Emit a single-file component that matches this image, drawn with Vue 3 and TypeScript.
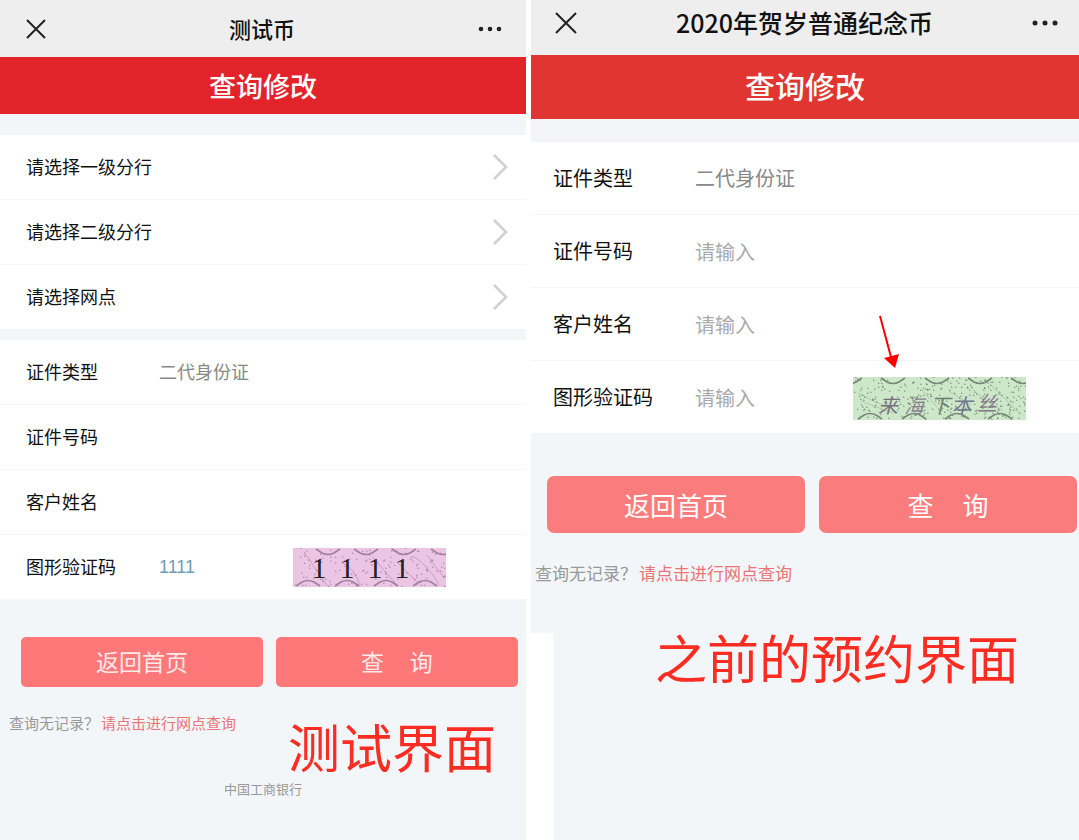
<script setup lang="ts">
import { ref } from 'vue'

interface Captcha {
  width: number
  height: number
  top: number[]
  bottom: number[]
}

const branches: string[] = ['请选择一级分行', '请选择二级分行', '请选择网点']

const testType = ref('二代身份证')
const testNumber = ref('')
const testName = ref('')
const testCode = ref('1111')

const coinType = ref('二代身份证')
const coinNumber = ref('')
const coinName = ref('')
const coinCode = ref('')

const pink: Captcha = { width: 153, height: 39, top: [35, 73, 111, 150], bottom: [15, 54, 93, 132] }
const green: Captcha = { width: 173, height: 43, top: [-3, 40, 84, 127, 170], bottom: [17, 61, 104, 147] }

function waves(c: Captcha): string {
  const upper = c.top.map((x) => `M${x - 12} 1l6 4q6 3 12 0l6 -4`)
  const lower = c.bottom.map((x) => `M${x - 12} ${c.height - 1}l6 -4q6 -3 12 0l6 4`)
  return upper.concat(lower).join('')
}

function specks(c: Captcha, count: number, start: number): string {
  let seed = start
  const next = (max: number): number => {
    seed = (seed * 1103515245 + 12345) % 2147483648
    return Math.floor((seed / 2147483648) * max)
  }
  let d = ''
  for (let i = 0; i < count; i++) d += `M${next(c.width)} ${next(c.height)}h1v1`
  return d
}
</script>

<template>
  <main class="compare">
    <section class="phone test" lang="zh-CN">
      <header class="bar">
        <button class="icon" aria-label="关闭">
          <svg width="20" height="20" viewBox="0 0 20 20"><path d="M1 1L19 19M19 1L1 19" /></svg>
        </button>
        <h1>测试币</h1>
        <button class="icon" aria-label="更多">
          <svg class="dots" width="24" height="6" viewBox="0 0 24 6">
            <circle cx="3" cy="3" r="2.3" /><circle cx="12" cy="3" r="2.3" /><circle cx="21" cy="3" r="2.3" />
          </svg>
        </button>
      </header>
      <h2 class="banner">查询修改</h2>

      <div class="group">
        <button v-for="b in branches" :key="b" class="row pick">
          <span>{{ b }}</span>
          <svg width="16" height="26" viewBox="0 0 16 26"><path d="M2 1L14 13L2 25" /></svg>
        </button>
      </div>

      <form class="group second" @submit.prevent>
        <div class="row">
          <label for="t-type">证件类型</label>
          <select id="t-type" v-model="testType"><option>二代身份证</option></select>
        </div>
        <div class="row">
          <label for="t-number">证件号码</label>
          <input id="t-number" v-model="testNumber" type="text" />
        </div>
        <div class="row">
          <label for="t-name">客户姓名</label>
          <input id="t-name" v-model="testName" type="text" />
        </div>
        <div class="row">
          <label for="t-code">图形验证码</label>
          <input id="t-code" v-model="testCode" class="code" type="text" />
          <svg class="captcha" width="153" height="39" viewBox="0 0 153 39" role="img" aria-label="验证码">
            <rect width="153" height="39" fill="#ecc5e5" />
            <path d="M14 8L34 38M48 14Q62 20 67 38M82 12L103 36M104 14L124 34M120 8Q138 20 146 37M134 7L151 30" fill="none" stroke="#c5a0c0" />
            <path :d="specks(pink, 130, 71)" fill="none" stroke="#8c6589" stroke-width="1" opacity=".55" />
            <path :d="waves(pink)" fill="none" stroke="#a27e9e" stroke-width="1.6" />
            <g class="digits">
              <text x="26" y="30">1</text><text x="54" y="30">1</text>
              <text x="82" y="30">1</text><text x="109" y="30">1</text>
            </g>
          </svg>
        </div>
      </form>

      <div class="actions">
        <button>返回首页</button>
        <button>查&nbsp;&nbsp;&nbsp;&nbsp;&nbsp;询</button>
      </div>
      <p class="hint">查询无记录？<a href="#">请点击进行网点查询</a></p>
      <p class="note">测试界面</p>
      <footer>中国工商银行</footer>
    </section>

    <section class="phone coin" lang="zh-CN">
      <header class="bar">
        <button class="icon" aria-label="关闭">
          <svg width="22" height="22" viewBox="0 0 22 22"><path d="M1 1L21 21M21 1L1 21" /></svg>
        </button>
        <h1>2020年贺岁普通纪念币</h1>
        <button class="icon" aria-label="更多">
          <svg class="dots" width="26" height="6" viewBox="0 0 26 6">
            <circle cx="3" cy="3" r="2.5" /><circle cx="13" cy="3" r="2.5" /><circle cx="23" cy="3" r="2.5" />
          </svg>
        </button>
      </header>
      <h2 class="banner">查询修改</h2>

      <form class="group" @submit.prevent>
        <div class="row">
          <label for="c-type">证件类型</label>
          <select id="c-type" v-model="coinType"><option>二代身份证</option></select>
        </div>
        <div class="row">
          <label for="c-number">证件号码</label>
          <input id="c-number" v-model="coinNumber" type="text" placeholder="请输入" />
        </div>
        <div class="row">
          <label for="c-name">客户姓名</label>
          <input id="c-name" v-model="coinName" type="text" placeholder="请输入" />
        </div>
        <div class="row">
          <label for="c-code">图形验证码</label>
          <input id="c-code" v-model="coinCode" type="text" placeholder="请输入" />
          <div class="marked">
            <svg class="captcha" width="173" height="43" viewBox="0 0 173 43" role="img" aria-label="验证码">
              <rect width="173" height="43" fill="#cde8c9" />
              <path d="M5 16Q20 24 34 30M8 24L40 36M68 12L84 30M96 14L118 28M118 10Q126 20 150 34M138 8L166 36" fill="none" stroke="#b3c5b1" />
              <path :d="specks(green, 300, 29)" fill="none" stroke="#4f654f" stroke-width="1" opacity=".55" />
              <path :d="waves(green)" fill="none" stroke="#788578" stroke-width="1.6" />
              <g class="script">
                <text x="25" y="36" fill="#77707c">来</text>
                <text x="51" y="36" fill="#8a8290">海</text>
                <text x="77" y="36" fill="#6f7f70">下</text>
                <text x="99" y="36" fill="#707590">本</text>
                <text x="124" y="34" fill="#85788a">丝</text>
              </g>
            </svg>
            <svg class="arrow" width="21" height="54" viewBox="0 0 21 54" aria-hidden="true">
              <path d="M1 1L12 42" fill="none" stroke="#f00" stroke-width="2" />
              <path d="M5 43L20 39L16 53Z" fill="#f00" />
            </svg>
          </div>
        </div>
      </form>

      <div class="actions">
        <button>返回首页</button>
        <button>查&nbsp;&nbsp;&nbsp;&nbsp;&nbsp;询</button>
      </div>
      <p class="hint">查询无记录？<a href="#">请点击进行网点查询</a></p>
      <div class="lower"><p class="note">之前的预约界面</p></div>
    </section>
  </main>
</template>

<style>
body {
  margin: 0;
  background: #fff;
}
</style>

<style scoped>
.compare {
  display: grid;
  grid-template-columns: 526fr 548fr;
  gap: 5px;
  min-height: 100vh;
  font-family: 'Noto Sans CJK SC', sans-serif;
  color: #111;
}
.phone {
  position: relative;
  display: flex;
  flex-direction: column;
  min-width: 0;
}
.test {
  --text: 18px;
  --label: 133px;
  background: #f3f6f8;
}
.coin {
  --text: 20px;
  --label: 142px;
}
button,
input,
select {
  margin: 0;
  padding: 0;
  border: 0;
  border-radius: 0;
  background: none;
  font: inherit;
  color: inherit;
}
h1,
h2,
p {
  margin: 0;
}
.bar {
  display: flex;
  align-items: center;
  justify-content: space-between;
  background: #eee;
}
.test .bar {
  height: 57px;
  padding: 0 24px 0 26px;
}
.coin .bar {
  height: 45px;
  padding: 0 21px 10px 24px;
}
.bar h1 {
  padding-bottom: 2px;
  font-weight: 500;
}
.test h1 {
  font-size: 22px;
  line-height: 32px;
}
.coin h1 {
  font-size: 25px;
  line-height: 36px;
}
.icon {
  display: flex;
}
.icon path {
  fill: none;
  stroke: #222;
  stroke-width: 2;
}
.dots {
  fill: #222;
}
.banner {
  color: #fff;
  font-weight: 500;
  text-align: center;
}
.test .banner {
  background: #e3232a;
  font-size: 27px;
  line-height: 57px;
}
.coin .banner {
  padding-bottom: 4px;
  background: #e03531;
  font-size: 30px;
  line-height: 60px;
}
.group {
  display: flex;
  flex-direction: column;
  gap: 1px;
  background: #f5f6f7;
}
.test .group {
  border-top: 21px solid #f3f6f8;
}
.test .second {
  border-top-width: 11px;
}
.coin .group {
  border-top: 23px solid #f4f5f8;
}
.row {
  display: flex;
  align-items: center;
  background: #fff;
  font-size: var(--text);
  line-height: 28px;
}
.test .row {
  height: 64px;
  padding: 0 18px 0 26px;
}
.test .row label,
.test .row select,
.pick span {
  padding-bottom: 2px;
}
.coin .row {
  height: 72px;
  padding: 0 0 0 22px;
}
.pick {
  justify-content: space-between;
  text-align: left;
}
.pick path {
  fill: none;
  stroke: #d0d0d2;
  stroke-width: 2.5;
}
.row label {
  flex: none;
  width: var(--label);
}
.row input,
.row select {
  flex: 1;
  min-width: 0;
  width: 0;
  height: 32px;
  appearance: none;
  outline: none;
}
.row select {
  color: #888;
  opacity: 1;
}
.row input::placeholder {
  color: #aaa;
  opacity: 1;
}
.row .code {
  color: #6f9db5;
  font-size: 18px;
  font-family: 'Liberation Sans', sans-serif;
}
.captcha {
  display: block;
  flex: none;
}
.test .captcha {
  margin-right: 62px;
}
.digits {
  font: 30px 'Liberation Serif', serif;
  fill: #222;
  text-anchor: middle;
}
.script {
  font: italic 20px 'Noto Sans CJK SC', sans-serif;
}
.marked {
  position: relative;
  margin: 2px 53px 0 0;
}
.arrow {
  position: absolute;
  left: 26px;
  top: -62px;
}
.actions {
  display: flex;
}
.actions button {
  flex: 1;
  color: #fff;
}
.test .actions {
  gap: 13px;
  padding: 38px 8px 0 21px;
}
.test .actions button {
  height: 50px;
  padding-bottom: 2px;
  border-radius: 5px;
  background: #ff7879;
  font-size: 23px;
  color: #ffe9e9;
}
.coin .actions {
  gap: 14px;
  padding: 43px 2px 0 16px;
  background: #f3f6f8;
}
.coin .actions button {
  height: 57px;
  border-radius: 7px;
  background: #fb7c7d;
  font-size: 26px;
}
.hint {
  color: #999;
}
.test .hint {
  padding: 24px 9px 0;
  font-size: 15px;
  line-height: 24px;
}
.coin .hint {
  padding: 28px 4px 48px;
  background: #f3f6f8;
  font-size: 17px;
  line-height: 24px;
}
.hint a {
  margin-left: 2px;
  color: #ea7478;
  text-decoration: none;
}
.note {
  color: #fb2c22;
  font-size: 52px;
  line-height: 48px;
  white-space: nowrap;
}
.test .note {
  position: absolute;
  right: 30px;
  top: 722px;
}
.lower {
  flex: 1;
  margin-left: 23px;
  padding-left: 101px;
  background: #f3f6f8;
}
footer {
  margin-top: 44px;
  color: #999;
  font-size: 13px;
  line-height: 20px;
  text-align: center;
}
</style>
